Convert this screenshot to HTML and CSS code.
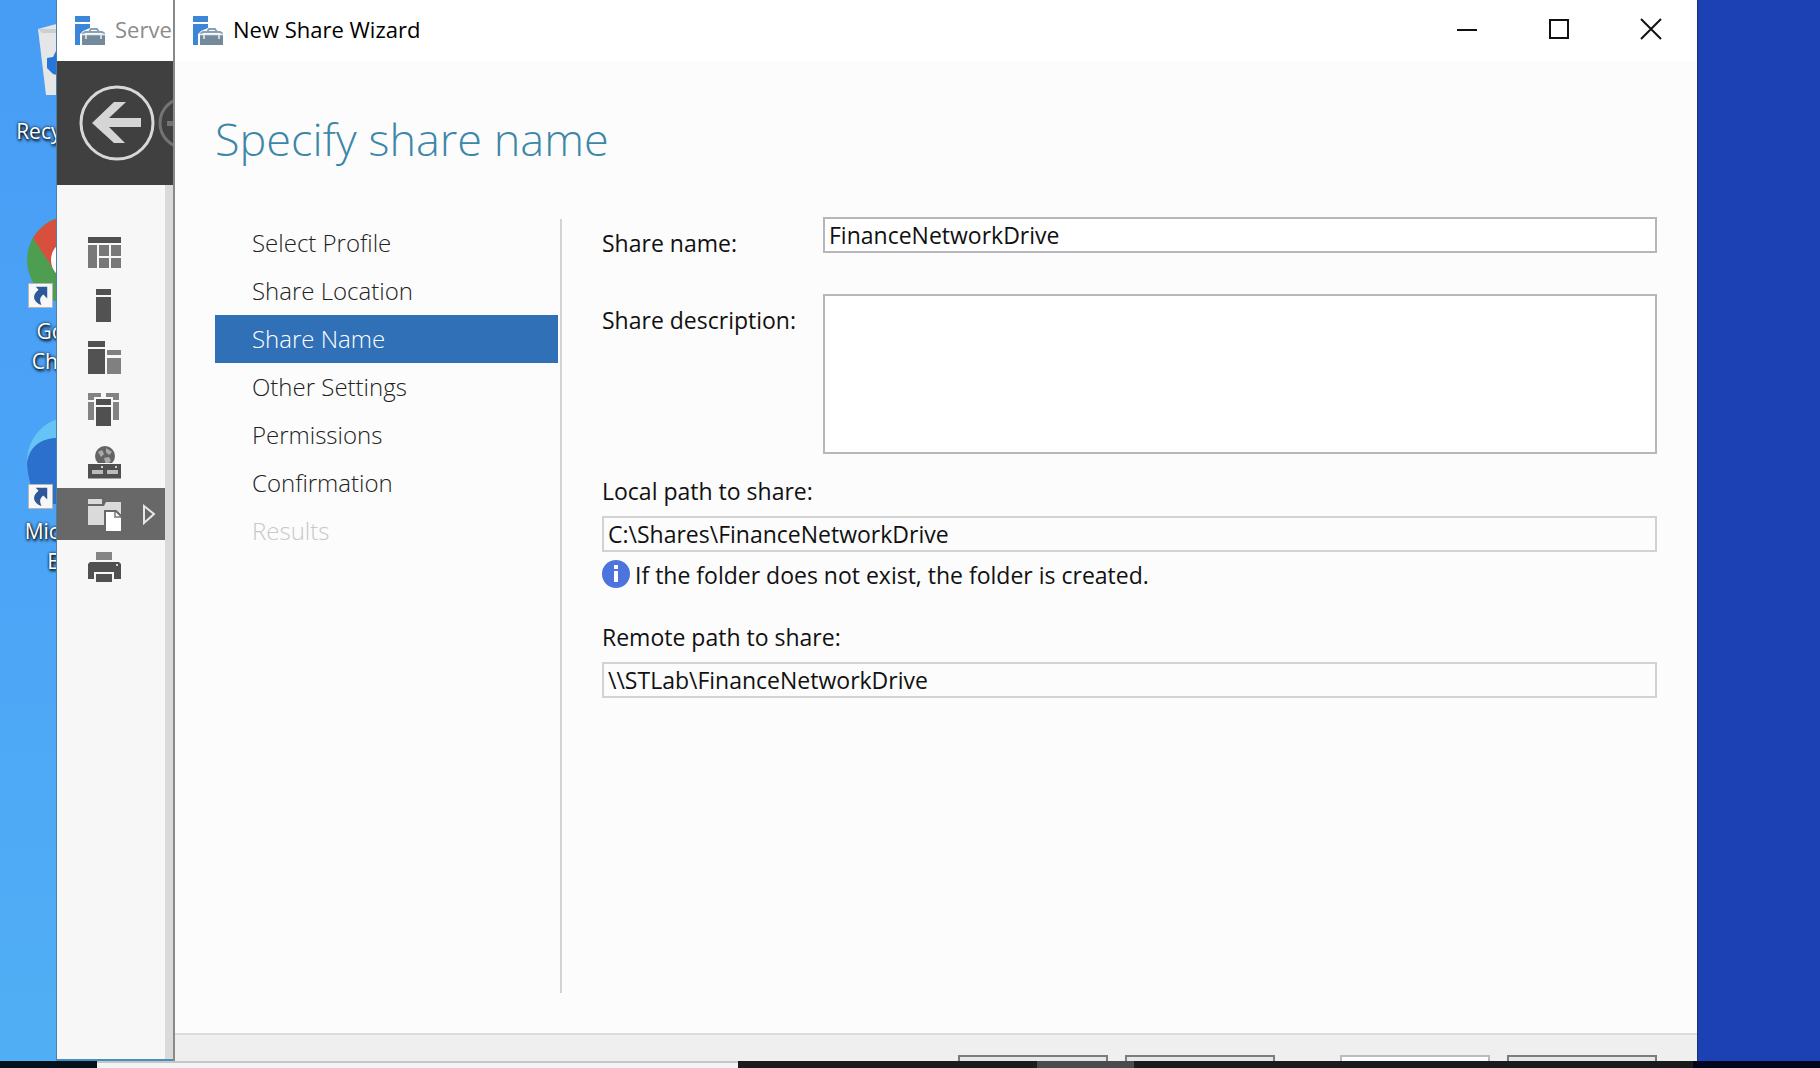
FILE: index.html
```html
<!DOCTYPE html>
<html lang="en">
<head>
<meta charset="utf-8">
<title>New Share Wizard</title>
<link rel="stylesheet" href="styles.css">
</head>
<body>
<svg class="defs" aria-hidden="true">
  <symbol id="server-icon" viewBox="0 0 30 30">
    <path fill="#3b86d6" d="M0 0h15v6H0zM0 8h15v4l-7 3-3 3v11H0z"/>
    <path fill="none" stroke="#8a9fb1" stroke-width="2" d="M7 18l3-2h17l3 2M14 16l2-3h6l2 3"/>
    <path fill="#74899c" d="M7 18h23v11H7z"/>
    <path fill="none" stroke="#e8eef2" stroke-width="1.5" d="M7 18.500h23M11 18v5M26 18v5"/>
  </symbol>
  <symbol id="shortcut" viewBox="0 0 26 26">
    <path fill="#f7f7f7" stroke="#b9b4ae" d="M.5.5h25v25H.5z"/>
    <path fill="#2c5799" d="M8 4h12v12l-4-4c-4 3-4 6-2 11-8-3-11-10-3-16z"/>
  </symbol>
</svg>

<main class="desktop">
  <div class="shortcuts">
    <a class="shortcut" href="#recycle">
      <svg class="shortcut-icon" viewBox="0 0 88 88"><path fill="#e4e6e8" d="M11 13l22-6h40l4 6-8 66H19z"/><path fill="#c9cfd4" d="M11 13l66 0-3 4H15z"/><path fill="#2676d9" d="M20 42l6-1 4-8 12 7v22l-16-4-6-6z"/></svg>
      <span>Recycle Bin</span>
    </a>
    <a class="shortcut" href="#chrome">
      <svg class="shortcut-icon" viewBox="0 0 88 88"><circle cx="44" cy="44" r="44" fill="#4d9e50"/><path fill="#d84f3d" d="M6 22A44 44 0 0 1 82 22L44 26 27 54z"/><circle cx="44" cy="44" r="20" fill="#fff"/><circle cx="44" cy="44" r="15" fill="#4587f3"/><use href="#shortcut" x="1" y="67" width="25" height="25"/></svg>
      <span>Google<br>Chrome</span>
    </a>
    <a class="shortcut" href="#edge">
      <svg class="shortcut-icon" viewBox="0 0 88 88"><circle cx="44" cy="45" r="44" fill="#66c3f5"/><path fill="#2c70cd" d="M0 47C2 31 14 22 30 22h40v66H16Q1 73 0 47z"/><use href="#shortcut" x="1" y="68" width="25" height="25"/></svg>
      <span>Microsoft<br>Edge</span>
    </a>
  </div>

  <section class="window manager" aria-label="Server Manager">
    <header class="titlebar">
      <svg class="app-icon"><use href="#server-icon"/></svg>
      <span>Server</span>
    </header>
    <div class="toolbar">
      <button class="nav-button" aria-label="Back"><svg viewBox="0 0 78 78"><circle cx="39" cy="39" r="36" fill="none" stroke="#d8d8d8" stroke-width="3"/><path fill="#d5d5d5" d="M14 39L36 18h12L31 34h32v9H31l16 16H36z"/></svg></button>
      <button class="nav-button small" aria-label="Forward"><svg viewBox="0 0 54 54"><circle cx="27" cy="27" r="25" fill="none" stroke="#737373" stroke-width="3"/><path fill="#737373" d="M9 25h26v5H9z"/></svg></button>
    </div>
    <nav class="rail">
      <a href="#dashboard" aria-label="Dashboard"><svg viewBox="0 0 34 34"><path fill="#505050" d="M0 0h33v6H0z"/><path fill="#787878" d="M0 8h9v23H0zM11 8h10v11H11zM23 8h10v11H23zM11 21h10v10H11zM23 21h10v10H23z"/></svg></a>
      <a href="#local" aria-label="Local Server"><svg viewBox="0 0 34 34"><path fill="#525252" d="M8 0h15v6H8zM8 8h15v25H8z"/></svg></a>
      <a href="#all" aria-label="All Servers"><svg viewBox="0 0 34 34"><path fill="#525252" d="M0 0h17v6H0zM0 8h17v25H0z"/><path fill="#808080" d="M19 9h14v5H19zM19 17h14v16H19z"/></svg></a>
      <a href="#adds" aria-label="Directory Services"><svg viewBox="0 0 34 34"><path fill="#838383" d="M0 0h13v4H6v3H0zM18 0h13v7h-6V4h-7zM0 9h6v18H0zM25 9h6v18h-6z"/><path fill="#505050" d="M8 6h15v6H8zM8 14h15v19H8z"/></svg></a>
      <a href="#dns" aria-label="DNS"><svg viewBox="0 0 34 34"><circle cx="17" cy="11" r="10" fill="#646464"/><path fill="#aaa" d="M10 7l4-2 2 4-3 3zM18 3l6 4-3 3-3-3zM16 13l5-1 2 4-5 4z"/><path fill="#505050" stroke="#f7f7f7" d="M-.5 18.500h34v15.500h-34z"/><path fill="#bbb" d="M4 25h11v4H4zM19 25h11v4H19z"/><circle cx="14" cy="22" r="1" fill="#fff"/><circle cx="28" cy="22" r="1" fill="#fff"/></svg></a>
      <a class="selected" href="#files" aria-label="File and Storage Services"><svg viewBox="0 0 34 34"><path fill="#dadada" d="M0 2h14v5H0zM0 9h16l2-4h15v23H0z"/><path fill="#fff" stroke="#686868" stroke-width="2" d="M17 14h11l6 6v15H17z"/><path fill="none" stroke="#777" stroke-width="1.500" d="M27 15v5h6"/></svg><svg class="expand" viewBox="0 0 14 22"><path fill="none" stroke="#e8e8e8" stroke-width="2" d="M2 3v17l10-9z"/></svg></a>
      <a href="#print" aria-label="Print Services"><svg viewBox="0 0 34 34"><path fill="#858585" d="M8 3h16v8H8z"/><path fill="#505050" d="M2 13h29l2 2v15H0V15z"/><path fill="#505050" stroke="#f7f7f7" stroke-width="2" d="M7 24h18v10H7z"/><circle cx="29" cy="16" r="1" fill="#fff"/></svg></a>
    </nav>
  </section>

  <section class="window wizard" aria-label="New Share Wizard">
    <header class="titlebar">
      <svg class="app-icon"><use href="#server-icon"/></svg>
      <span>New Share Wizard</span>
      <div class="window-controls">
        <button aria-label="Minimize"><svg viewBox="0 0 22 22"><path d="M1 12h20"/></svg></button>
        <button aria-label="Maximize"><svg viewBox="0 0 22 22"><path d="M2 2h18v18H2z"/></svg></button>
        <button aria-label="Close"><svg viewBox="0 0 22 22"><path d="M1 1l20 20M21 1L1 21"/></svg></button>
      </div>
    </header>
    <h1>Specify share name</h1>
    <div class="wizard-body">
      <nav class="steps">
        <a href="#profile">Select Profile</a>
        <a href="#location">Share Location</a>
        <a class="current" href="#name" aria-current="step">Share Name</a>
        <a href="#settings">Other Settings</a>
        <a href="#permissions">Permissions</a>
        <a href="#confirmation">Confirmation</a>
        <a class="disabled" href="#results" aria-disabled="true">Results</a>
      </nav>
      <form class="share-form" id="share-form">
        <div class="field-row">
          <label for="share-name">Share name:</label>
          <input id="share-name" type="text" value="FinanceNetworkDrive">
        </div>
        <div class="field-row">
          <label for="description">Share description:</label>
          <textarea id="description"></textarea>
        </div>
        <div class="field-stack">
          <label for="local-path">Local path to share:</label>
          <input id="local-path" type="text" value="C:\Shares\FinanceNetworkDrive" readonly>
          <p class="hint"><svg viewBox="0 0 28 28"><circle cx="14" cy="14" r="14" fill="#4d74dc"/><path fill="#fff" d="M12 5h4v4h-4zM12 11h4v11h-4z"/></svg>If the folder does not exist, the folder is created.</p>
        </div>
        <div class="field-stack">
          <label for="remote-path">Remote path to share:</label>
          <input id="remote-path" type="text" value="\\STLab\FinanceNetworkDrive" readonly>
        </div>
      </form>
    </div>
    <footer class="wizard-actions">
      <button aria-label="Previous"></button>
      <button aria-label="Next"></button>
      <button class="create" aria-label="Create" disabled></button>
      <button aria-label="Cancel"></button>
    </footer>
  </section>

  <footer class="taskbar">
    <span class="start"></span>
    <span class="search"></span>
    <span class="pinned"></span>
    <span class="active-task"></span>
  </footer>
</main>
</body>
</html>
```
FILE: styles.css
```css
* { box-sizing: border-box; }

body {
  margin: 0;
  font: 22px/30px "Open Sans", "Noto Sans", sans-serif;
  color: #111;
}

.defs { position: absolute; width: 0; height: 0; }
button { padding: 0; border: 0; background: none; }
a { color: inherit; text-decoration: none; }

.desktop {
  position: relative;
  height: 100vh;
  overflow: hidden;
  background: linear-gradient(90deg, transparent 50%, #1b41b4 50%), linear-gradient(#479df4, #4ca4f7 50%, #50aff4);
}

/* Desktop shortcuts */
.shortcuts {
  display: flex;
  flex-direction: column;
  gap: 25px;
  width: 142px;
  padding-top: 16px;
}
.shortcut {
  display: flex;
  flex-direction: column;
  align-items: center;
  gap: 12px;
  min-height: 175px;
  color: #fff;
  font-size: 21px;
  text-align: center;
  text-shadow: 1px 2px 3px #000, 0 0 3px #000;
}
.shortcut-icon { width: 88px; height: 88px; overflow: visible; }

/* Windows */
.window { position: absolute; top: 0; display: flex; flex-direction: column; }
.titlebar {
  display: flex;
  align-items: center;
  flex: none;
  height: 61px;
  gap: 10px;
  padding-left: 18px;
  background: #fff;
}
.titlebar span { padding-bottom: 3px; }
.app-icon { width: 30px; height: 30px; }

/* Server Manager */
.manager {
  left: 56px;
  bottom: 7px;
  width: 140px;
  border-left: 1px solid #4b7fa8;
  border-bottom: 2px solid #4590b8;
  background: #f7f7f7;
}
.manager .titlebar { color: #8b8b8b; }
.toolbar {
  display: flex;
  align-items: center;
  flex: none;
  height: 124px;
  gap: 2px;
  padding-left: 21px;
  background: #404040;
}
.nav-button { flex: none; width: 78px; height: 78px; }
.nav-button.small { width: 54px; height: 54px; }
.nav-button svg { display: block; }
.rail {
  flex: 1;
  width: 116px;
  padding-top: 43px;
  border-right: 8px solid #dadada;
}
.rail a { display: flex; align-items: center; gap: 20px; height: 52px; padding-left: 31px; }
.rail svg { width: 34px; height: 34px; }
.rail .selected { background: #686868; }
.rail .expand { width: 14px; height: 22px; }

/* Wizard */
.wizard {
  left: 173px;
  right: 122px;
  bottom: 0;
  border-left: 2px solid #898989;
  border-right: 1px solid #17356f;
  background: #fcfcfc;
}
.wizard .titlebar { color: #000; }
.window-controls { display: flex; align-self: stretch; margin-left: auto; }
.window-controls button { width: 92px; }
.window-controls svg { width: 22px; height: 22px; fill: none; stroke: #111; stroke-width: 2; }
h1 {
  margin: 0;
  padding: 46px 40px 0;
  color: #3c87a8;
  font-size: 45px;
  font-weight: 300;
  line-height: 64px;
}
.wizard-body {
  display: flex;
  flex: 1;
  gap: 40px;
  padding: 46px 40px 40px;
}
.steps {
  flex: none;
  width: 347px;
  margin-top: 2px;
  padding-right: 2px;
  border-right: 2px solid #d3d3d3;
  color: #222;
  font-size: 24px;
  font-weight: 300;
  line-height: 48px;
}
.steps a { display: block; padding-left: 37px; }
.steps .current { background: #2f70b7; color: #fff; }
.steps .disabled { color: #c8c8c8; }

.share-form { display: flex; flex: 1; flex-direction: column; font-size: 23px; }
.field-row { display: flex; margin-bottom: 36px; }
.field-row label { flex: none; width: 221px; padding-top: 11px; }
.field-row:nth-child(2) { margin-bottom: 22px; }
input, textarea {
  display: block;
  flex: 1;
  min-width: 0;
  height: 36px;
  padding: 0 4px;
  border: 2px solid #b6b6bb;
  border-radius: 0;
  outline: 0;
  background: #fff;
  color: inherit;
  font: inherit;
}
textarea { height: 160px; resize: none; }
.field-stack { margin-bottom: 32px; }
.field-stack label { display: block; margin-bottom: 10px; }
.field-stack input { width: 100%; border-color: #d2d2d2; background: #fcfcfc; }
.hint { display: flex; align-items: flex-start; gap: 5px; margin: 8px 0 0; }
.hint svg { width: 28px; height: 28px; }

.wizard-actions {
  display: flex;
  justify-content: flex-end;
  flex: none;
  gap: 17px;
  height: 35px;
  padding: 20px 40px 0 0;
  border-top: 2px solid #dcdcdc;
  background: #efefef;
}
.wizard-actions button { width: 150px; height: 40px; border: 2px solid #7a7d7d; background: #e6e8e8; }
.wizard-actions .create { margin-left: 48px; border-color: #b6bcbf; background: #fff; }

/* Taskbar */
.taskbar {
  position: absolute;
  right: 0;
  bottom: 0;
  left: 0;
  display: flex;
  height: 7px;
  background: linear-gradient(90deg, #1b1b1b 93%, #01051e 93%);
}
.start { width: 97px; background: #03131d; }
.search { width: 641px; border-top: 2px solid #c6c6c6; background: #f3f3f3; }
.pinned { width: 299px; }
.active-task { width: 97px; background: #4b4b4b; }
```
